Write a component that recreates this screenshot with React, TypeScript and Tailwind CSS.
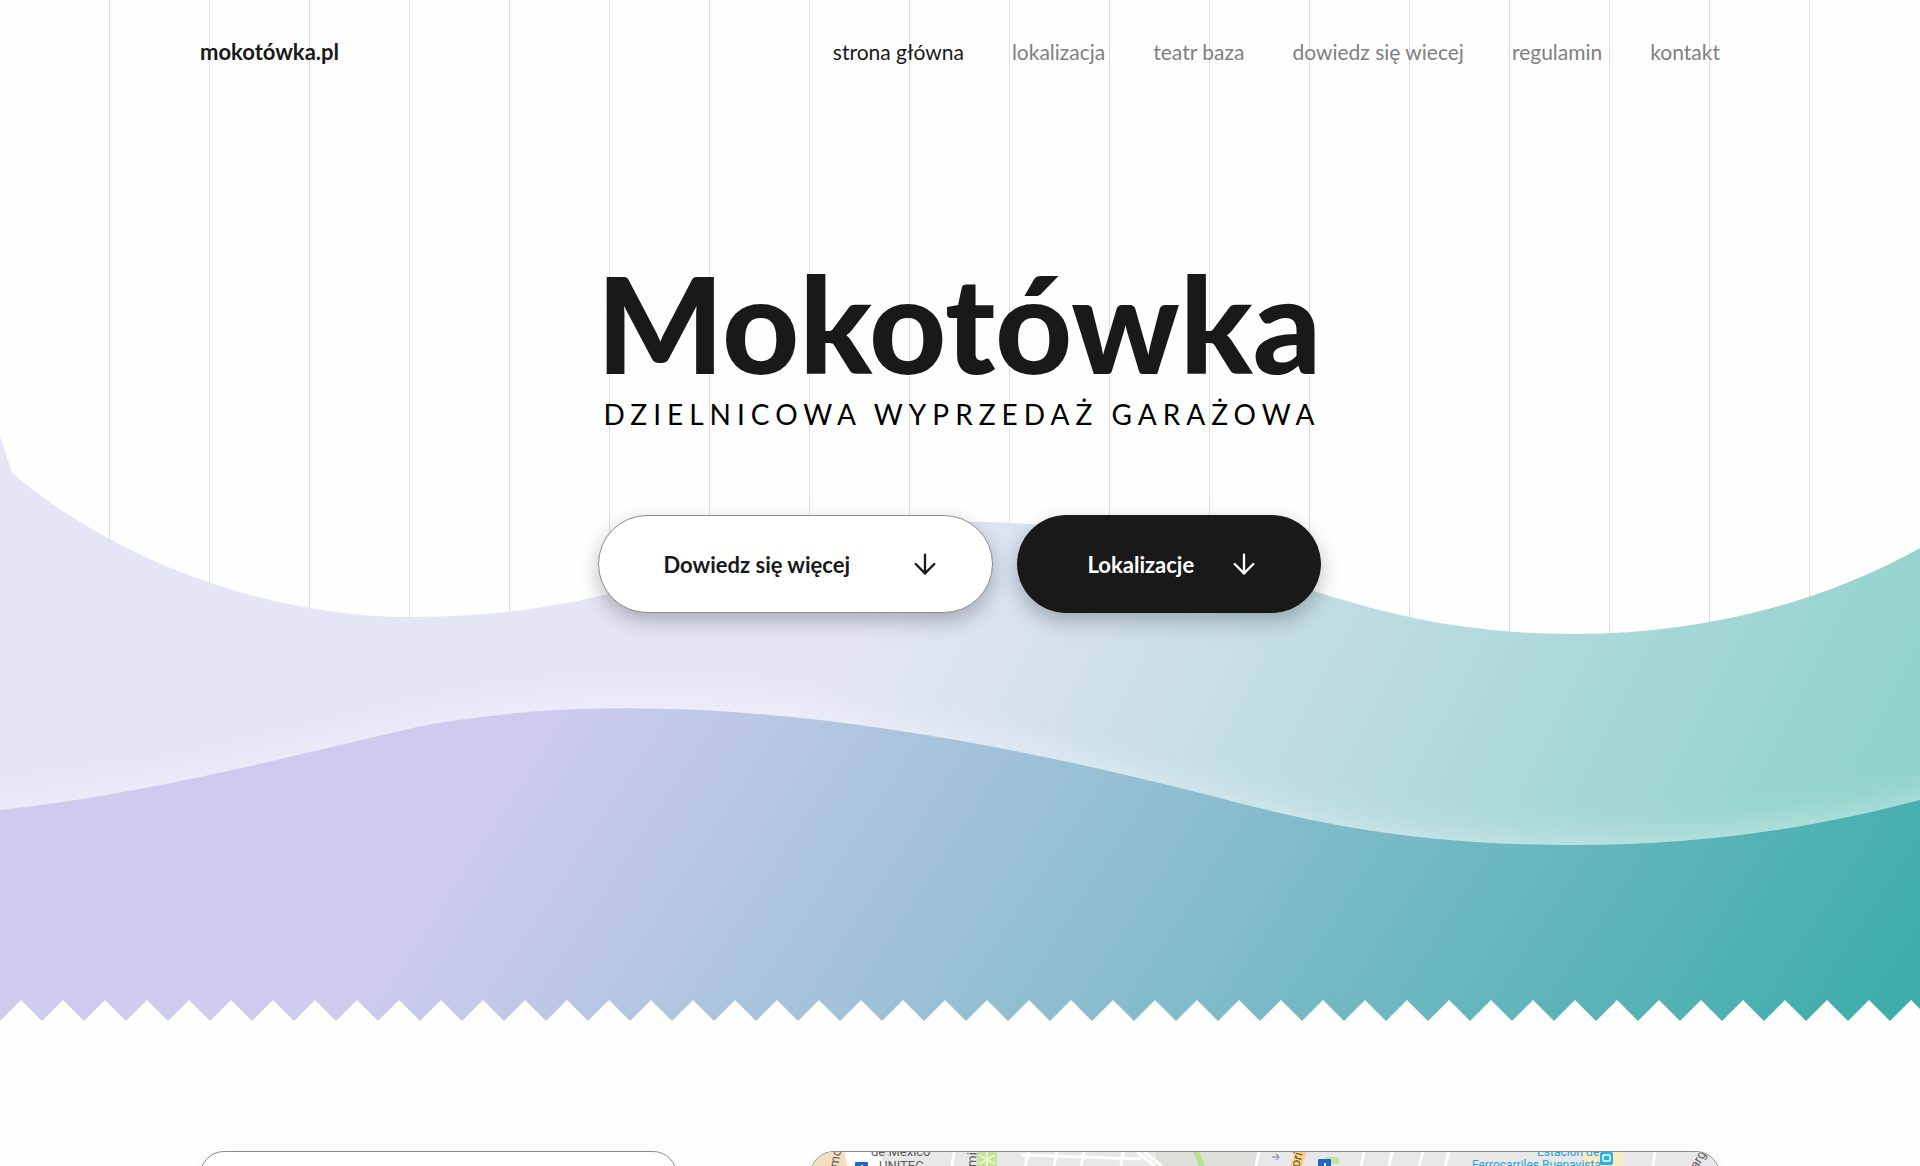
import { ArrowDown } from "lucide-react";

const links = [
  "strona główna",
  "lokalizacja",
  "teatr baza",
  "dowiedz się wiecej",
  "regulamin",
  "kontakt",
];

function GridLines() {
  return (
    <div aria-hidden="true" className="absolute inset-0 flex justify-center gap-[99px] overflow-hidden pr-px">
      {Array.from({ length: 18 }, (_, i) => (
        <div key={i} className="w-px shrink-0 bg-[#dedede]" />
      ))}
    </div>
  );
}

function Waves() {
  return (
    <svg
      aria-hidden="true"
      className="absolute inset-0 h-full w-full"
      viewBox="0 0 1920 1021"
      preserveAspectRatio="none"
    >
      <defs>
        <linearGradient id="back" gradientUnits="userSpaceOnUse" x1="800" y1="700" x2="1700" y2="1160">
          <stop offset="0" stopColor="#e6e5f6" />
          <stop offset="1" stopColor="#8ed2ca" />
        </linearGradient>
        <linearGradient id="front" gradientUnits="userSpaceOnUse" x1="484" y1="812" x2="1591" y2="1531">
          <stop offset="0" stopColor="#cecbee" />
          <stop offset="1" stopColor="#3aada8" />
        </linearGradient>
        <filter id="glow" x="-5%" y="-20%" width="110%" height="140%">
          <feGaussianBlur stdDeviation="20" />
        </filter>
        <clipPath id="backShape">
          <path d="M0 436 L12 473 C110 556 260 617 412 617 C660 617 740 522 970 522 C1240 522 1310 634 1575 634 C1700 634 1820 604 1920 548 V1021 H0Z" />
        </clipPath>
        <pattern id="teeth" width="42" height="21" patternUnits="userSpaceOnUse" y="1000">
          <path d="M0 21 L21 0 L42 21Z" fill="#fefefe" />
        </pattern>
      </defs>
      <g clipPath="url(#backShape)">
        <rect width="1920" height="1021" fill="url(#back)" />
        <path
          d="M-60 818 C140 800 250 765 412 728 C700 660 960 735 1200 793 C1300 818 1400 845 1575 845 C1700 845 1820 827 1980 786 V1080 H-60Z"
          fill="#fff"
          opacity="0.45"
          filter="url(#glow)"
        />
      </g>
      <path
        d="M0 810 C140 795 280 759 412 728 C660 678 960 732 1200 793 C1300 819 1400 845 1575 845 C1700 845 1810 829 1920 800 V1021 H0Z"
        fill="url(#front)"
      />
      <rect y="1000" width="1920" height="21" fill="url(#teeth)" />
    </svg>
  );
}

function MapDrawing() {
  return (
    <svg
      role="img"
      aria-label="Mapa"
      className="h-[420px] w-full"
      viewBox="0 0 908 420"
      preserveAspectRatio="xMinYMin slice"
    >
      <rect width="908" height="420" fill="#e8e8e8" />
      <path d="M0 0H60L36 14V420H0Z" fill="#f3dfc0" />
      <path d="M34 0H66L76 14H36Z" fill="#fff" />
      <rect x="166" width="20" height="420" fill="#c5e59a" />
      <path d="M176 0v14M168 3l16 9M184 3l-16 9" stroke="#e6f5cf" strokeWidth="2" />
      <path d="M345 0H448L455 420H355Z" fill="#dde0db" />
      <path d="M382 0h6l6 14h-6z" fill="#b9e28c" />
      <path
        d="M143 0l-2 14M218 0l-4 14M246 0l-3 14M273 0l-3 14M312 0l-2 14M448 0l-3 14M553 0l-3 14M581 0l-3 14M612 0l-4 14M638 0l-4 14M844 0l-2 14M210 3l120 4"
        stroke="#fff"
        strokeWidth="3"
        fill="none"
      />
      <path d="M326 0l18 14M333 0l18 14" stroke="#fff" strokeWidth="3" />
      <path d="M484 0h12l-5 14h-12z" fill="#f8d28c" />
      <rect x="514" y="5" width="14" height="7" fill="#c5e59a" />
      <rect x="772" width="40" height="14" fill="#f8ecc4" />
      <rect x="44" y="10" width="13" height="14" rx="1" fill="#1967c8" />
      <rect x="507" y="7" width="13" height="14" rx="1" fill="#1967c8" />
      <path d="M51 13v6M514 11v8" stroke="#fff" strokeWidth="2" />
      <rect x="789" y="0" width="13" height="13" rx="2" fill="#2bb0e6" />
      <rect x="792" y="3" width="7" height="6" rx="1" fill="none" stroke="#fff" strokeWidth="1.5" />
      <path d="M461 5h7m-3-3l3 3-3 3" stroke="#9aa0c4" strokeWidth="1.5" fill="none" />
      <g fontFamily="Roboto, sans-serif" fontSize="13" fill="#5c5c5c">
        <text x="60" y="4">de México</text>
        <text x="68" y="18">UNITEC</text>
        <text transform="translate(27 16) rotate(-80)">mo</text>
        <text transform="translate(165 15) rotate(-88)">mil</text>
        <text transform="translate(488 16) rotate(-75)" fill="#6d5220">oric</text>
        <text transform="translate(886 18) rotate(-60)">arg</text>
        <g fill="#24a3d8" fontSize="12">
          <text x="726" y="4">Estación de</text>
          <text x="661" y="17">Ferrocarriles Buenavista</text>
        </g>
      </g>
    </svg>
  );
}

export default function App() {
  return (
    <div className="h-screen overflow-hidden bg-[#fefefe] font-['Lato',sans-serif] text-[#191919]">
      <section className="relative h-[1021px]">
        <GridLines />
        <Waves />
        <div className="relative mx-auto flex max-w-[1520px] flex-col">
          <header className="flex items-center justify-between pt-9">
            <a href="#" className="text-[22px] leading-8 font-bold">
              mokotówka.pl
            </a>
            <nav className="flex gap-12">
              {links.map((label, i) => (
                <a
                  key={label}
                  href="#"
                  className={i === 0 ? "text-[21px] leading-8" : "text-[21px] leading-8 text-[#808080]"}
                >
                  {label}
                </a>
              ))}
            </nav>
          </header>
          <main className="flex flex-col items-center pt-[188px] pr-0.5">
            <h1 className="text-[134px] leading-[134px] font-black">Mokotówka</h1>
            <p className="pt-1 pl-1.5 text-[28px] leading-10 tracking-[6px] text-black">
              DZIELNICOWA WYPRZEDAŻ GARAŻOWA
            </p>
            <div className="flex gap-6 pt-[81px]">
              <button className="flex h-[98px] w-[395px] items-center justify-between rounded-full border border-[#8c8c8c] bg-white pr-[51px] pl-[65px] text-[22px] font-bold shadow-[0_8px_20px_rgba(0,0,0,0.25)]">
                Dowiedz się więcej
                <ArrowDown size={32} strokeWidth={1.75} />
              </button>
              <button className="flex h-[98px] w-[304px] items-center justify-between rounded-full border border-[#191919] bg-[#191919] pr-[60px] pl-[70px] text-[22px] font-bold text-white shadow-[0_8px_20px_rgba(0,0,0,0.25)]">
                Lokalizacje
                <ArrowDown size={32} strokeWidth={1.75} />
              </button>
            </div>
          </main>
        </div>
      </section>
      <section className="mx-auto flex max-w-[1520px] justify-between pt-[130px]">
        <div className="h-[420px] w-[477px] rounded-3xl border border-[#8c8c8c] bg-white shadow-[0_4px_16px_rgba(0,0,0,0.06)]" />
        <div className="w-[910px] overflow-hidden rounded-3xl border border-[#8c8c8c] shadow-[0_4px_16px_rgba(0,0,0,0.06)]">
          <MapDrawing />
        </div>
      </section>
    </div>
  );
}
